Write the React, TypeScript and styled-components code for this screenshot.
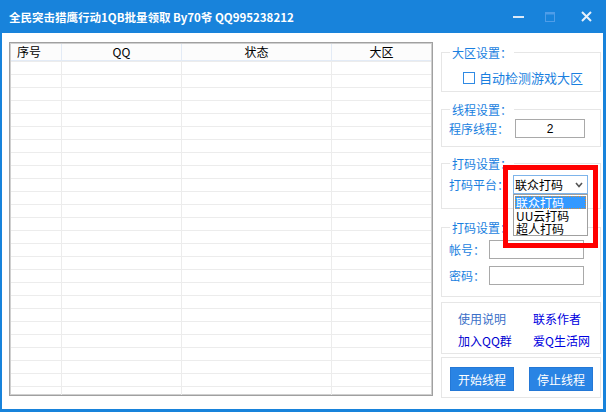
import React from 'react';
import styled, { createGlobalStyle } from 'styled-components';

const GlobalStyle = createGlobalStyle`
  html, body {
    margin: 0;
    padding: 0;
    background: #ffffff;
  }
  body {
    font-family: "Noto Sans CJK SC", "Liberation Sans", sans-serif;
    font-size: 12px;
    color: #000;
  }
`;

const Window = styled.div`
  width: 606px;
  height: 412px;
  box-sizing: border-box;
  display: flex;
  flex-direction: column;
  background: #1883db;
  padding: 0 3px 3px 2px;
  overflow: hidden;
`;

const TitleBar = styled.div`
  height: 33px;
  flex: none;
  display: flex;
  align-items: center;
  padding-left: 7px;
  color: #ffffff;
`;

const Title = styled.div`
  flex: 1;
  font-weight: bold;
  font-size: 11.5px;
  white-space: nowrap;
`;

const Controls = styled.div`
  display: flex;
  height: 100%;
`;

const ControlButton = styled.div<{ $w: number }>`
  width: ${({ $w }) => $w}px;
  height: 100%;
  display: flex;
  align-items: center;
  justify-content: center;
`;

const Body = styled.div`
  flex: 1;
  background: #ffffff;
  display: flex;
  align-items: flex-start;
  gap: 8px;
  padding-left: 7px;
  min-height: 0;
`;

/* ---------- list view ---------- */

const Table = styled.div`
  margin-top: 9px;
  width: 424px;
  height: 354px;
  box-sizing: border-box;
  border: 1px solid #a0a0a0;
  box-shadow: inset 0 0 0 1px #cfcfcf;
  padding: 1px;
  display: flex;
  flex-direction: column;
  overflow: hidden;
`;

const Cols = '51px 120px 150px 1fr';

const HeaderRow = styled.div`
  display: grid;
  grid-template-columns: ${Cols};
  height: 17px;
  box-sizing: border-box;
  background: #fcfcfc;
  border-bottom: 1px solid #e3ebf6;
  flex: none;
`;

const HeaderCell = styled.div<{ $left?: boolean }>`
  border-right: 1px solid #e3ebf6;
  display: flex;
  align-items: center;
  justify-content: ${({ $left }) => ($left ? 'flex-start' : 'center')};
  padding-left: ${({ $left }) => ($left ? '6px' : '0')};
  font-size: 12px;
  line-height: 16px;
  &:last-child {
    border-right: none;
  }
`;

const Row = styled.div`
  display: grid;
  grid-template-columns: ${Cols};
  height: 13px;
  box-sizing: border-box;
  border-top: 1px solid #ececec;
  flex: none;
`;

const Cell = styled.div`
  border-right: 1px solid #ececec;
  &:last-child {
    border-right: none;
  }
`;

/* ---------- right panel ---------- */

const Panel = styled.div`
  width: 160px;
  display: flex;
  flex-direction: column;
  padding-top: 19px;
`;

const Group = styled.div<{ $mt: number; $h: number }>`
  position: relative;
  margin-top: ${({ $mt }) => $mt}px;
  height: ${({ $h }) => $h}px;
  box-sizing: border-box;
  border: 1px solid #e6e6e6;
`;

const Legend = styled.div`
  position: absolute;
  top: -8px;
  left: 8px;
  padding: 0 2px;
  background: #ffffff;
  color: #1a7fe0;
  font-size: 12px;
  line-height: 15px;
`;

const CheckRow = styled.label`
  display: flex;
  align-items: center;
  padding: 18px 0 0 21px;
  color: #1a7fe0;
  font-size: 13px;
  line-height: 13px;
`;

const CheckBox = styled.span`
  width: 12px;
  height: 12px;
  box-sizing: border-box;
  border: 1px solid #2f8ae4;
  background: #fff;
  margin-right: 4px;
`;

const FieldStack = styled.div<{ $pt: number }>`
  display: flex;
  flex-direction: column;
  gap: 7px;
  padding: ${({ $pt }) => $pt}px 0 0 7px;
`;

const FieldRow = styled.div`
  display: flex;
  align-items: center;
  height: 19px;
`;

const FieldLabel = styled.span<{ $w: number }>`
  width: ${({ $w }) => $w}px;
  flex: none;
  color: #1a7fe0;
  font-size: 12px;
`;

const TextBox = styled.div<{ $w: number; $center?: boolean }>`
  width: ${({ $w }) => $w}px;
  height: 19px;
  box-sizing: border-box;
  border: 1px solid #a9a9a9;
  background: #fff;
  display: flex;
  align-items: center;
  justify-content: ${({ $center }) => ($center ? 'center' : 'flex-start')};
  font-family: "Liberation Sans", sans-serif;
  font-size: 12px;
`;

const SelectWrap = styled.div`
  position: relative;
`;

const SelectBox = styled.div`
  width: 75px;
  height: 19px;
  box-sizing: border-box;
  border: 1px solid #7eb4ea;
  background: #fff;
  display: flex;
  align-items: center;
  justify-content: space-between;
  padding: 0 4px 0 1px;
  font-size: 12px;
`;

const DropList = styled.div`
  position: absolute;
  top: 19px;
  left: 0;
  width: 75px;
  height: 42px;
  box-sizing: border-box;
  border: 1px solid #a0a0a0;
  background: #fff;
  padding: 1px;
  z-index: 5;
`;

const DropItem = styled.div<{ $active?: boolean }>`
  height: 13px;
  line-height: 13px;
  box-sizing: border-box;
  padding-left: 1px;
  font-size: 12px;
  white-space: nowrap;
  color: ${({ $active }) => ($active ? '#ffffff' : '#000000')};
  background: ${({ $active }) => ($active ? '#3399ff' : 'transparent')};
  outline: ${({ $active }) => ($active ? '1px dotted #d9903a' : 'none')};
  outline-offset: -1px;
`;

const Highlight = styled.div`
  position: absolute;
  left: 61px;
  top: 1px;
  width: 95px;
  height: 83px;
  box-sizing: border-box;
  border: 5px solid #ff0000;
  z-index: 10;
  pointer-events: none;
`;

const LinkGrid = styled.div`
  display: grid;
  grid-template-columns: 75px 1fr;
  padding: 5px 0 0 16px;
`;

const Link = styled.span<{ $color: string }>`
  color: ${({ $color }) => $color};
  font-size: 12px;
  line-height: 21.5px;
  white-space: nowrap;
`;

const ButtonRow = styled.div`
  display: flex;
  gap: 15px;
  padding: 9px 0 0 8px;
`;

const ActionButton = styled.div`
  width: 64px;
  height: 24px;
  box-sizing: border-box;
  background: #2a84e4;
  border: 1px solid #2478d6;
  color: #ffffff;
  font-size: 12px;
  display: flex;
  align-items: center;
  justify-content: center;
`;

const rows = Array.from({ length: 27 });

export default function App() {
  return (
    <>
      <GlobalStyle />
      <Window>
        <TitleBar>
          <Title>全民突击猎鹰行动1QB批量领取 By70爷 QQ995238212</Title>
          <Controls>
            <ControlButton $w={26}>
              <svg width="11" height="11" viewBox="0 0 11 11">
                <rect x="0" y="5" width="11" height="2" fill="#dbe9f8" />
              </svg>
            </ControlButton>
            <ControlButton $w={38}>
              <svg width="10" height="10" viewBox="0 0 10 10">
                <rect x="0.5" y="0.5" width="9" height="9" fill="none" stroke="#4f9de8" />
                <rect x="0" y="0" width="10" height="2.5" fill="#4f9de8" />
              </svg>
            </ControlButton>
            <ControlButton $w={34}>
              <svg width="11" height="11" viewBox="0 0 11 11">
                <path d="M1 1 L10 10 M10 1 L1 10" stroke="#e6f0fb" strokeWidth="2" />
              </svg>
            </ControlButton>
          </Controls>
        </TitleBar>
        <Body>
          <Table>
            <HeaderRow>
              <HeaderCell $left>序号</HeaderCell>
              <HeaderCell>QQ</HeaderCell>
              <HeaderCell>状态</HeaderCell>
              <HeaderCell>大区</HeaderCell>
            </HeaderRow>
            {rows.map((_, i) => (
              <Row key={i}>
                <Cell />
                <Cell />
                <Cell />
                <Cell />
              </Row>
            ))}
          </Table>

          <Panel>
            <Group $mt={0} $h={40}>
              <Legend>大区设置：</Legend>
              <CheckRow>
                <CheckBox />
                自动检测游戏大区
              </CheckRow>
            </Group>

            <Group $mt={17} $h={38}>
              <Legend>线程设置：</Legend>
              <FieldStack $pt={9}>
                <FieldRow>
                  <FieldLabel $w={66}>程序线程：</FieldLabel>
                  <TextBox $w={70} $center>2</TextBox>
                </FieldRow>
              </FieldStack>
            </Group>

            <Group $mt={16} $h={46}>
              <Legend>打码设置：</Legend>
              <FieldStack $pt={11}>
                <FieldRow>
                  <FieldLabel $w={64}>打码平台：</FieldLabel>
                  <SelectWrap>
                    <SelectBox>
                      <span>联众打码</span>
                      <svg width="8" height="6" viewBox="0 0 8 6">
                        <path d="M1 1 L4 4.5 L7 1" fill="none" stroke="#555" strokeWidth="1.6" />
                      </svg>
                    </SelectBox>
                    <DropList>
                      <DropItem $active>联众打码</DropItem>
                      <DropItem>UU云打码</DropItem>
                      <DropItem>超人打码</DropItem>
                    </DropList>
                  </SelectWrap>
                </FieldRow>
              </FieldStack>
              <Highlight />
            </Group>

            <Group $mt={18} $h={70}>
              <Legend>打码设置：</Legend>
              <FieldStack $pt={12}>
                <FieldRow>
                  <FieldLabel $w={40}>帐号：</FieldLabel>
                  <TextBox $w={95} />
                </FieldRow>
                <FieldRow>
                  <FieldLabel $w={40}>密码：</FieldLabel>
                  <TextBox $w={95} />
                </FieldRow>
              </FieldStack>
            </Group>

            <Group $mt={5} $h={52}>
              <LinkGrid>
                <Link $color="#3a6fc8">使用说明</Link>
                <Link $color="#0000e0">联系作者</Link>
                <Link $color="#0000d0">加入QQ群</Link>
                <Link $color="#0000e0">爱Q生活网</Link>
              </LinkGrid>
            </Group>

            <Group $mt={3} $h={41}>
              <ButtonRow>
                <ActionButton>开始线程</ActionButton>
                <ActionButton>停止线程</ActionButton>
              </ButtonRow>
            </Group>
          </Panel>
        </Body>
      </Window>
    </>
  );
}
